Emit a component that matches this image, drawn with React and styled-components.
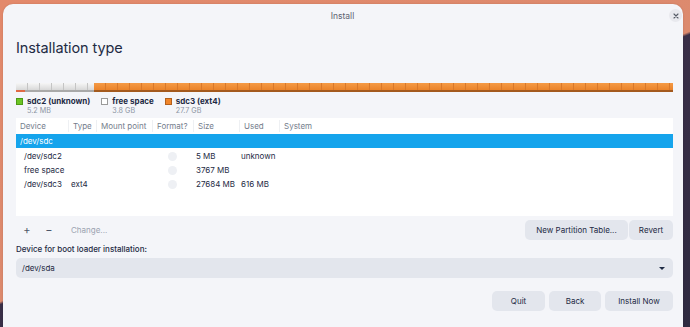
import React from "react";
import styled, { createGlobalStyle } from "styled-components";

const Global = createGlobalStyle`
  html, body {
    margin: 0;
    padding: 0;
    height: 100%;
    overflow: hidden;
  }
  body {
    font-family: Inter, "Noto Sans", sans-serif;
    background: linear-gradient(158.6deg, #e3896b 0%, #dc8a6e 50.5%, #3a2f48 51%, #2f2a40 100%);
  }
`;

const Window = styled.div`
  margin: 4px 7px 0 3px;
  height: 323px;
  background: #f4f5f9;
  border-radius: 10px 10px 0 0;
  box-shadow: 0 0 2px rgba(0, 0, 0, 0.15);
  display: flex;
  flex-direction: column;
`;

const TitleBar = styled.div`
  height: 23px;
  display: grid;
  grid-template-columns: 1fr auto 1fr;
  align-items: center;
  padding-right: 1px;
`;

const Title = styled.span`
  grid-column: 2;
  font-size: 8.5px;
  color: #5d6372;
`;

const CloseButton = styled.button`
  justify-self: end;
  width: 13px;
  height: 13px;
  border: none;
  border-radius: 50%;
  background: #e8e9ee;
  color: #555b66;
  padding: 0;
  display: flex;
  align-items: center;
  justify-content: center;
`;

const Body = styled.div`
  padding: 0 10px 0 13px;
  display: flex;
  flex-direction: column;
`;

const Heading = styled.h1`
  margin: 12px 0 0 0;
  font-size: 14.5px;
  line-height: 18px;
  font-weight: 400;
  color: #1e2a44;
  letter-spacing: -0.1px;
`;

const Bar = styled.div`
  margin-top: 26px;
  height: 9px;
  display: flex;
`;

const Segment = styled.div`
  flex: ${(p) => p.$grow};
  position: relative;
  border-bottom: 2px solid ${(p) => p.$edge};
  background:
    repeating-linear-gradient(90deg, transparent 0 11px, ${(p) => p.$tick} 11px 12px),
    linear-gradient(${(p) => p.$top}, ${(p) => p.$bottom});
`;

const UsedMark = styled.span`
  position: absolute;
  left: 0;
  bottom: -2px;
  width: 9px;
  height: 2px;
  background: #e06a45;
`;

const Legend = styled.div`
  margin-top: 4px;
  display: flex;
  gap: 11px;
`;

const LegendItem = styled.div`
  display: grid;
  grid-template-columns: 7px auto;
  column-gap: 4px;
  align-items: center;
`;

const Swatch = styled.span`
  width: 7px;
  height: 7px;
  box-sizing: border-box;
  background: ${(p) => p.$color};
  border: 1px solid ${(p) => p.$border};
`;

const LegendName = styled.span`
  font-size: 8px;
  font-weight: 700;
  color: #1e2a44;
  line-height: 11px;
`;

const LegendSize = styled.span`
  grid-column: 2;
  font-size: 7.2px;
  color: #8d95a4;
  line-height: 8px;
`;

const Table = styled.div`
  margin-top: 3px;
  background: #ffffff;
  height: 98px;
  display: flex;
  flex-direction: column;
`;

const rowHeight = (p) => (p.$header || p.$selected ? 15 : 14);

const Row = styled.div`
  display: grid;
  grid-template-columns: 52px 28px 56px 41px 46px 40px 1fr;
  height: ${rowHeight}px;
  align-items: center;
  font-size: 8px;
  color: ${(p) => (p.$selected ? "#ffffff" : p.$header ? "#747d8c" : "#1e2a44")};
  background: ${(p) =>
    p.$selected ? "linear-gradient(#15a4ec 0 14px, transparent 14px)" : "transparent"};
  margin-bottom: ${(p) => (p.$header ? 1 : 0)}px;
`;

const HeadCell = styled.span`
  height: 12px;
  line-height: 12px;
  padding-left: 4px;
  border-left: ${(p) => (p.$first ? "none" : "1px solid #eef0f3")};
  white-space: nowrap;
`;

const Cell = styled.span`
  padding-left: ${(p) => p.$indent || 3}px;
  padding-bottom: ${(p) => (p.$top ? 1 : 0)}px;
  white-space: nowrap;
`;

const FormatDot = styled.span`
  justify-self: center;
  width: 9px;
  height: 9px;
  border-radius: 50%;
  background: #eef0f4;
`;

const Toolbar = styled.div`
  margin-top: 4px;
  height: 20px;
  display: flex;
  align-items: center;
`;

const IconButton = styled.span`
  width: 22px;
  text-align: center;
  font-size: 11px;
  color: #4b5568;
`;

const ChangeLink = styled.span`
  margin-left: 11px;
  font-size: 8px;
  color: #9ba3b1;
`;

const Spacer = styled.div`
  flex: 1;
`;

const Button = styled.button`
  height: 20px;
  width: ${(p) => p.$w}px;
  border: none;
  border-radius: 5px;
  background: #e3e6ed;
  color: #1e2a44;
  font-family: inherit;
  font-size: 8px;
  padding: 0;
`;

const ButtonGroup = styled.div`
  display: flex;
  gap: ${(p) => p.$gap}px;
`;

const Label = styled.div`
  margin-top: 4px;
  font-size: 8px;
  font-weight: 500;
  color: #1e2a44;
  line-height: 10px;
`;

const Combo = styled.div`
  margin-top: 4px;
  height: 20px;
  border-radius: 5px;
  background: #e3e6ed;
  display: flex;
  align-items: center;
  justify-content: space-between;
  padding: 0 8px 0 6px;
  font-size: 8px;
  color: #1e2a44;
`;

const Caret = styled.span`
  width: 0;
  height: 0;
  border-left: 3px solid transparent;
  border-right: 3px solid transparent;
  border-top: 3px solid #1e2a44;
`;

const Footer = styled.div`
  margin-top: 13px;
  display: flex;
  justify-content: flex-end;
`;

const rows = [
  { device: "/dev/sdc2", type: "", size: "5 MB", used: "unknown" },
  { device: "free space", type: "", size: "3767 MB", used: "" },
  { device: "/dev/sdc3", type: "ext4", size: "27684 MB", used: "616 MB" },
];

const headers = ["Device", "Type", "Mount point", "Format?", "Size", "Used", "System"];

export default function App() {
  return (
    <>
      <Global />
      <Window>
        <TitleBar>
          <Title>Install</Title>
          <CloseButton aria-label="close">
            <svg width="6" height="6" viewBox="0 0 6 6">
              <path d="M1 1 L5 5 M5 1 L1 5" stroke="#555b66" strokeWidth="1.1" strokeLinecap="round" />
            </svg>
          </CloseButton>
        </TitleBar>
        <Body>
          <Heading>Installation type</Heading>
          <Bar>
            <Segment $grow={78} $top="#f6f6f6" $bottom="#d8d8d8" $tick="#c4c4c4" $edge="#a9a9a9">
              <UsedMark />
            </Segment>
            <Segment $grow={579} $top="#f59a45" $bottom="#ea832a" $tick="#d9782a" $edge="#a45a1e" />
          </Bar>
          <Legend>
            <LegendItem>
              <Swatch $color="#6cc424" $border="#4e9a14" />
              <LegendName>sdc2 (unknown)</LegendName>
              <LegendSize>5.2 MB</LegendSize>
            </LegendItem>
            <LegendItem>
              <Swatch $color="#ffffff" $border="#9a9a9a" />
              <LegendName>free space</LegendName>
              <LegendSize>3.8 GB</LegendSize>
            </LegendItem>
            <LegendItem>
              <Swatch $color="#f0852a" $border="#b4601c" />
              <LegendName>sdc3 (ext4)</LegendName>
              <LegendSize>27.7 GB</LegendSize>
            </LegendItem>
          </Legend>
          <Table>
            <Row $header>
              {headers.map((h, i) => (
                <HeadCell key={h} $first={i === 0}>
                  {h}
                </HeadCell>
              ))}
            </Row>
            <Row $selected>
              <Cell $indent={4} $top>
                /dev/sdc
              </Cell>
            </Row>
            {rows.map((r) => (
              <Row key={r.device}>
                <Cell $indent={8}>{r.device}</Cell>
                <Cell>{r.type}</Cell>
                <Cell />
                <FormatDot />
                <Cell>{r.size}</Cell>
                <Cell $indent={2}>{r.used}</Cell>
                <Cell />
              </Row>
            ))}
          </Table>
          <Toolbar>
            <IconButton>+</IconButton>
            <IconButton>−</IconButton>
            <ChangeLink>Change...</ChangeLink>
            <Spacer />
            <ButtonGroup $gap={1}>
              <Button $w={103}>New Partition Table...</Button>
              <Button $w={44}>Revert</Button>
            </ButtonGroup>
          </Toolbar>
          <Label>Device for boot loader installation:</Label>
          <Combo>
            <span>/dev/sda</span>
            <Caret />
          </Combo>
          <Footer>
            <ButtonGroup $gap={4}>
              <Button $w={53}>Quit</Button>
              <Button $w={52}>Back</Button>
              <Button $w={68}>Install Now</Button>
            </ButtonGroup>
          </Footer>
        </Body>
      </Window>
    </>
  );
}
